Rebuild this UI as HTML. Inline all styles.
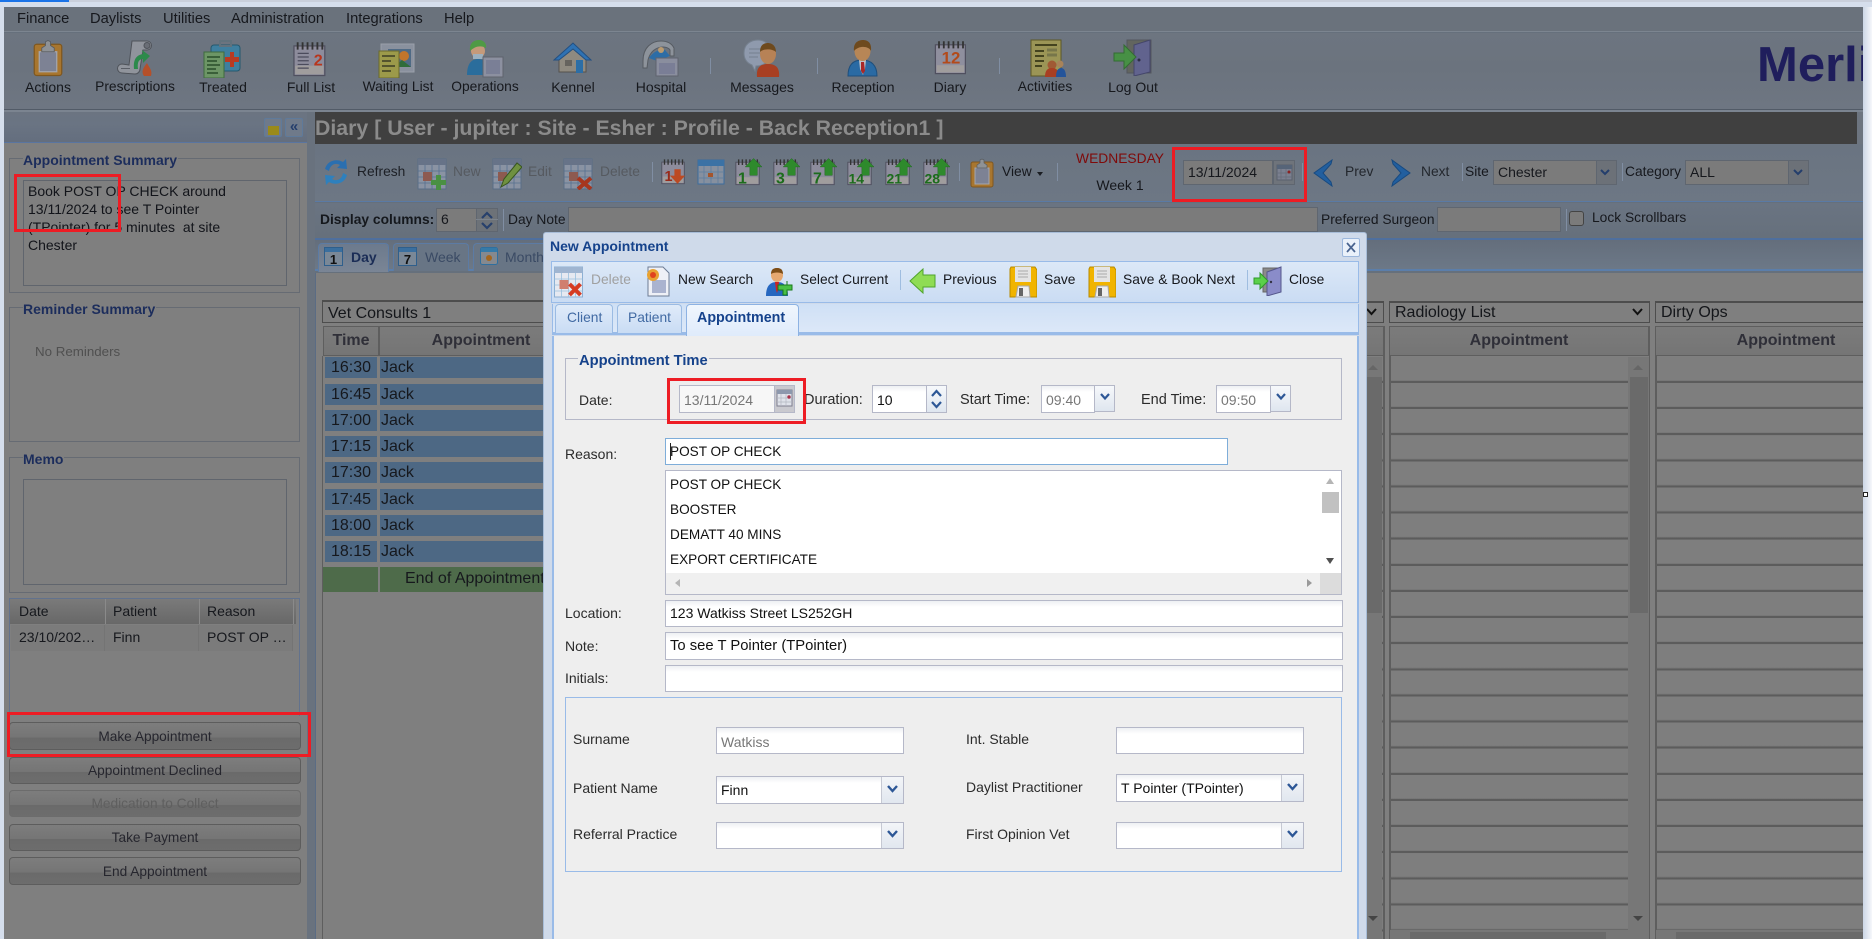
<!DOCTYPE html>
<html lang="en"><head><meta charset="utf-8"><title>Diary</title>
<style>
*{box-sizing:border-box}
html,body{margin:0;padding:0;width:1872px;height:939px;overflow:hidden;background:#d5deec;font-family:"Liberation Sans",Arial,sans-serif;font-size:14px;color:#16181d}
.a,.t,svg.i{position:absolute}
.t{white-space:nowrap;line-height:20px;height:20px}
.c{transform:translateX(-50%)}
.b{font-weight:bold}
.lg{font-weight:bold;color:#1c2d5c;background:#7f7f7f;padding-right:1px}
.fs{position:absolute;border:1px solid #666b73}
.ta{position:absolute;border:1px solid #60656d;background:#7f7f7f}
.btn{position:absolute;left:9px;width:292px;border:1px solid #5d5d5d;border-radius:4px;background:linear-gradient(#7d7d7d 0,#757575 55%,#6a6a6a 56%,#6d6d6d 100%);text-align:center;color:#26262e;line-height:25px;font-size:13.7px}
.sep{position:absolute;width:1px;background:#808ea3}
.dim{position:absolute;background:#777;border:1px solid #5f6670}
.red{position:absolute;border:3px solid #ed1c24;z-index:50}
.hd{position:absolute;background:linear-gradient(#7b7b7b,#757575);border:1px solid #5e5e5e}
.sel{position:absolute;border:1px solid #4d4d4d;background:#7f7f7f;border-top-width:2px}
.bl{position:absolute;background:#4d6884}
.col{position:absolute;top:357px;height:582px;background:repeating-linear-gradient(#7e7e7e 0,#7e7e7e 23px,#797979 23px,#757575 24px,#5c5c5c 24px,#5c5c5c 26px,#757575 26px,#7e7e7e 26.12px)}
.mi{position:absolute;border:1px solid #b5b8c8;background:linear-gradient(#eef0f3,#fff 6px);color:#111;line-height:25px;padding-left:4px}
.tr{position:absolute;border:1px solid #b5b8c8;background:linear-gradient(#f6f8fb,#dfe6ef)}
.fl{position:absolute;border:1px solid #b5b8c8}
.ml{position:absolute;white-space:nowrap;line-height:20px;height:20px;color:#2b2b2b}
.mb{color:#20242c}
</style></head>
<body>
<svg width="0" height="0" style="position:absolute">
<defs>
<symbol id="cal" viewBox="0 0 30 30"><rect x="2" y="4" width="25" height="24" fill="#8d8c9c" stroke="#50505f"/><rect x="3" y="20" width="23" height="7" fill="#a09d9d"/><path d="M5 1v6M9 1v6M13 1v6M17 1v6M21 1v6M25 1v6" stroke="#333" stroke-width="1.5"/></symbol>
<symbol id="grid" viewBox="0 0 30 32"><rect x="1" y="1" width="28" height="30" fill="#8a93a3" stroke="#5a6d86"/><rect x="1" y="1" width="28" height="6" fill="#677388"/><path d="M8 7v24M15 7v24M22 7v24M1 13h28M1 19h28M1 25h28" stroke="#56708f" stroke-width=".8"/><rect x="6" y="14" width="9" height="9" fill="#8d5a50"/></symbol>
<symbol id="lite" viewBox="0 0 30 32"><rect x="1" y="1" width="28" height="30" fill="#e6e9f1" stroke="#8cb0d4"/><rect x="1" y="1" width="28" height="6" fill="#9fb5d1"/><path d="M8 7v24M15 7v24M22 7v24M1 13h28M1 19h28M1 25h28" stroke="#9ac0df" stroke-width=".8"/><rect x="6" y="14" width="9" height="9" fill="#d07f6f"/><path d="M16 18l11 11M27 18l-11 11" stroke="#d63b22" stroke-width="4"/></symbol>
<symbol id="disk" viewBox="0 0 28 32"><path d="M2 1h24l2 3v27H1V3z" fill="#f1b400" stroke="#b78a00"/><rect x="6" y="1" width="16" height="15" fill="#e4e4e4"/><path d="M9 5h10M9 8h10M9 11h10" stroke="#aaa"/><path d="M7 31l2-11h11l1 11z" fill="#eee" stroke="#aaa"/><rect x="10" y="22" width="4" height="8" fill="#666"/></symbol>
<symbol id="cb" viewBox="0 0 24 30"><rect x="1" y="4" width="22" height="25" rx="2" fill="#a8762f" stroke="#7f571f"/><rect x="5" y="10" width="14" height="16" fill="#7d8294" stroke="#a5a7ae"/><path d="M7 7l3-2V2l2-1 2 1v3l3 2v3H7z" fill="#8f9296" stroke="#595c60" stroke-width=".7"/></symbol>
</defs>
</svg>

<!-- window edges -->
<div class="a" style="left:0;top:0;width:69px;height:2px;background:#1a73e8"></div>
<div class="a" style="left:69px;top:0;width:1803px;height:2px;background:#c9cfdb"></div>
<div class="a" style="left:1863px;top:7px;width:9px;height:932px;background:linear-gradient(90deg,#ccd6e6,#f6f8fb)"></div>
<div class="a" style="left:1863px;top:492px;width:5px;height:5px;background:#fff;border:1px solid #222"></div>

<!-- main dim region -->
<div class="a" style="left:4px;top:7px;width:1859px;height:932px;background:#66707c"></div>

<!-- menu -->
<div class="a" style="left:4px;top:7px;width:1859px;height:25px;background:#6a727c;border-bottom:1px solid #7c8590"></div>
<div class="t" style="left:17px;top:9px;font-size:14.7px">Finance</div>
<div class="t" style="left:90px;top:9px;font-size:14.7px">Daylists</div>
<div class="t" style="left:163px;top:9px;font-size:14.7px">Utilities</div>
<div class="t" style="left:231px;top:9px;font-size:14.7px">Administration</div>
<div class="t" style="left:346px;top:9px;font-size:14.7px">Integrations</div>
<div class="t" style="left:444px;top:9px;font-size:14.7px">Help</div>

<!-- main toolbar -->
<div class="a" style="left:4px;top:33px;width:1859px;height:77px;background:linear-gradient(#6d7580,#6b737e 45%,#6e7682);border-bottom:1px solid #525b67"></div>
<div class="a" style="left:4px;top:110px;width:1859px;height:2px;background:#7b8490"></div>

<svg class="i" style="left:33px;top:39px" width="30" height="38" viewBox="0 0 24 30"><use href="#cb"/></svg>
<svg class="i" style="left:117px;top:39px" width="38" height="38" viewBox="0 0 38 38"><path d="M15 2h15a4.500 4.500 0 0 1 0 9h-4l-3 19a5 5 0 0 1-5 5L5 34a4.500 4.500 0 0 1 0-9l7 1z" fill="#90949c" stroke="#4f535a"/><circle cx="30" cy="6.500" r="3" fill="#6a6e76" stroke="#4f535a"/><path d="M4 29.500h9" stroke="#5a5e66"/><path d="M17 30c-1-9 2-14 9-15l-1-4 8 6-7 7v-4c-4 0-6 3-5 10z" fill="#2c8a4b"/><path d="M27 37c-3-4-1-8 3-13 1 3 6 7 4 13z" fill="#b5502a"/></svg>
<svg class="i" style="left:203px;top:40px" width="38" height="38" viewBox="0 0 38 38"><rect x="8" y="5" width="29" height="26" rx="3" fill="#3f7f9f" stroke="#24586e"/><rect x="17" y="1" width="11" height="5" fill="none" stroke="#61727d" stroke-width="2"/><path d="M27 12h4v5h5v5h-5v5h-4v-5h-5v-5h5z" fill="#b83a22"/><rect x="1" y="12" width="20" height="26" fill="#6d9666" stroke="#3e6b3e"/><path d="M4 17h13M4 21h10M4 25h13M4 29h9M4 33h11" stroke="#294f2a" stroke-width="1.4"/></svg>
<svg class="i" style="left:291px;top:41px" width="38" height="37" viewBox="0 0 30 30"><use href="#cal"/><text x="18" y="20" font-family="Liberation Sans" font-weight="bold" font-size="13" fill="#b8351c">2</text><path d="M5 10h9M5 13h9M5 16h9M5 19h9M5 22h9" stroke="#4b4b5c"/></svg>
<svg class="i" style="left:378px;top:43px" width="39" height="35" viewBox="0 0 39 35"><rect x="3" y="1" width="33" height="28" fill="#8a919e" stroke="#9aa0aa"/><rect x="10" y="6" width="23" height="18" fill="#4f6a85"/><circle cx="26" cy="13" r="5" fill="#c2752c"/><path d="M16 24l8-7 9 7z" fill="#2f6c3a"/><rect x="1" y="8" width="20" height="27" fill="#9c9a4a" stroke="#6b6a2c"/><path d="M4 13h13M4 18h9M4 23h13M4 28h9" stroke="#3d3d24" stroke-width="1.5"/></svg>
<svg class="i" style="left:466px;top:39px" width="39" height="39" viewBox="0 0 39 39"><path d="M1 36c0-12 5-16 11-16s12 4 12 16z" fill="#2a6d9c"/><circle cx="12" cy="12" r="7" fill="#c59a7a"/><path d="M4 12c-1-9 5-11 9-11s8 3 7 8c-5-3-11-2-16 3z" fill="#4f9a45"/><path d="M7 15h10v5H7z" fill="#9bb0bf"/><rect x="17" y="18" width="20" height="20" fill="#8c90a0" stroke="#5f636d"/><rect x="20" y="21" width="14" height="14" fill="#7a7f96"/></svg>
<svg class="i" style="left:553px;top:42px" width="39" height="32" viewBox="0 0 39 32"><path d="M6 14l14-9 13 9v16H6z" fill="#8f8a80" stroke="#55524d"/><rect x="12" y="18" width="7" height="6" fill="#66635e"/><rect x="23" y="18" width="7" height="13" fill="#2c6ea6"/><path d="M1 18L20 1l18 17-5 0L20 7 6 18z" fill="#2f72b3" stroke="#234f80"/></svg>
<svg class="i" style="left:640px;top:39px" width="40" height="38" viewBox="0 0 40 38"><path d="M3 22C3 8 12 2 21 2c7 0 11 3 13 7v8h-4v-6c-3-5-18-5-22 10l-1 8H3z" fill="#8d939b" stroke="#565b62"/><path d="M9 19c4-6 10-9 16-8l5 6-13 5z" fill="#2d6da6"/><circle cx="21" cy="11" r="3" fill="#b89a70"/><rect x="16" y="19" width="22" height="18" fill="#8a8e9e" stroke="#5f636d"/><rect x="19" y="24" width="16" height="11" fill="#7a7e96"/></svg>
<svg class="i" style="left:743px;top:39px" width="38" height="38" viewBox="0 0 38 38"><path d="M1 14C1 5 8 1 15 1s12 4 12 13-7 13-14 13l-1 5-3-6C4 24 1 20 1 14z" fill="#8f9aad" stroke="#76818f"/><path d="M6 10h14M6 14h12M6 18h9" stroke="#74808f"/><path d="M14 38c-1-10 4-13 11-13s12 3 11 13z" fill="#a83f22"/><ellipse cx="25" cy="15" rx="8" ry="10" fill="#b78256"/><path d="M17 13c0-8 5-9 8-9s8 2 8 9c-3-3-12-4-16 0z" fill="#6e4a1e"/></svg>
<svg class="i" style="left:847px;top:39px" width="31" height="38" viewBox="0 0 31 38"><path d="M1 37c0-11 5-16 14-16s15 5 15 16z" fill="#2a6aa3" stroke="#1f4f7c"/><path d="M12 21h7l-1 9-2 6-3-6z" fill="#bcc0c8"/><path d="M14 23h3l1 9-2 3-2-3z" fill="#a82828"/><ellipse cx="15.500" cy="12" rx="8" ry="10" fill="#b78656"/><path d="M7 12C6 3 12 1 16 1s9 2 8 11c-2-5-12-6-17 0z" fill="#6e4a1e"/></svg>
<svg class="i" style="left:933px;top:40px" width="36" height="36" viewBox="0 0 30 30"><use href="#cal"/><rect x="3" y="8" width="23" height="13" fill="#8f8f9e"/><text x="15" y="19.500" text-anchor="middle" font-family="Liberation Sans" font-weight="bold" font-size="14" fill="#b34a1a">12</text></svg>
<svg class="i" style="left:1030px;top:39px" width="36" height="38" viewBox="0 0 36 38"><rect x="1" y="1" width="30" height="36" fill="#9b9556" stroke="#5c5826"/><path d="M5 6h22M5 12h9M5 17h9M5 22h9M5 27h7" stroke="#44431f" stroke-width="2"/><path d="M17 11h10M17 16h10" stroke="#77764a" stroke-width="3"/><circle cx="22" cy="26" r="4.500" fill="#a05a34"/><path d="M15 38c0-7 3-9 7-9s7 2 7 9z" fill="#a83f22"/><circle cx="30" cy="25" r="3.500" fill="#a88359"/><path d="M26 38c0-6 2-9 5-9s5 3 5 9z" fill="#24549a"/></svg>
<svg class="i" style="left:1113px;top:39px" width="39" height="37" viewBox="0 0 39 37"><rect x="14" y="1" width="24" height="33" fill="#62655f" stroke="#53565e"/><path d="M21 6l16-5v32l-16 4z" fill="#61638e" stroke="#44466a"/><circle cx="26" cy="21" r="1.500" fill="#2c2c44"/><path d="M1 14h10V6l12 12-12 12v-8H1z" fill="#479045" stroke="#336c33"/></svg>

<div class="sep" style="left:710px;top:58px;height:16px"></div>
<div class="sep" style="left:817px;top:58px;height:16px"></div>
<div class="sep" style="left:999px;top:58px;height:16px"></div>
<div class="t c" style="left:48px;top:77px;color:#15181d">Actions</div>
<div class="t c" style="left:135px;top:77px;font-size:13.8px">Prescriptions</div>
<div class="t c" style="left:223px;top:77px">Treated</div>
<div class="t c" style="left:311px;top:77px">Full List</div>
<div class="t c" style="left:398px;top:77px;font-size:13.8px">Waiting List</div>
<div class="t c" style="left:485px;top:77px;font-size:13.8px">Operations</div>
<div class="t c" style="left:573px;top:77px">Kennel</div>
<div class="t c" style="left:661px;top:77px">Hospital</div>
<div class="t c" style="left:762px;top:77px">Messages</div>
<div class="t c" style="left:863px;top:77px">Reception</div>
<div class="t c" style="left:950px;top:77px">Diary</div>
<div class="t c" style="left:1045px;top:77px;font-size:13.8px">Activities</div>
<div class="t c" style="left:1133px;top:77px">Log Out</div>

<div class="a" style="left:1757px;top:36px;width:106px;height:60px;overflow:hidden"><div style="font:bold 49px/58px 'Liberation Sans',sans-serif;color:#1f1e5c;white-space:nowrap;letter-spacing:0">Merlin</div></div>

<!-- left sidebar -->
<div class="a" style="left:4px;top:112px;width:303px;height:31px;background:linear-gradient(#6b7481,#6a7483 40%,#646e7e);border-bottom:1px solid #5a75a0"></div>
<div class="a" style="left:4px;top:143px;width:303px;height:796px;background:#7f7f7f"></div>
<div class="a" style="left:307px;top:112px;width:8px;height:827px;background:#69727e"></div>
<div class="a" style="left:264px;top:118px;width:18px;height:19px;border:1px solid #5f7a9a;border-radius:2px;background:#6f7a8a"></div>
<div class="a" style="left:268px;top:126px;width:11px;height:9px;background:#9a8a1a"></div>
<div class="a" style="left:285px;top:118px;width:18px;height:19px;border:1px solid #5f7a9a;border-radius:2px;background:#6f7a8a;color:#243e6c;font:bold 15px/15px 'Liberation Sans',sans-serif;text-align:center">«</div>

<div class="fs" style="left:9px;top:158px;width:291px;height:135px"></div>
<div class="t lg" style="left:23px;top:150px">Appointment Summary</div>
<div class="ta" style="left:23px;top:180px;width:264px;height:106px"></div>
<div class="a" style="left:28px;top:182px;width:240px;font-size:14px;line-height:18px;color:#12141a">Book POST OP CHECK around<br>13/11/2024 to see T Pointer<br>(TPointer) for 5 minutes&nbsp; at site<br>Chester</div>

<div class="fs" style="left:9px;top:307px;width:291px;height:135px"></div>
<div class="t lg" style="left:23px;top:299px">Reminder Summary</div>
<div class="t" style="left:35px;top:342px;font-size:13.33px;color:#505050">No Reminders</div>

<div class="fs" style="left:9px;top:457px;width:291px;height:136px"></div>
<div class="t lg" style="left:23px;top:449px">Memo</div>
<div class="ta" style="left:23px;top:479px;width:264px;height:106px"></div>

<div class="a" style="left:9px;top:598px;width:291px;height:118px;border:1px solid #62728d;border-bottom:none"></div>
<div class="a" style="left:10px;top:599px;width:286px;height:25px;background:linear-gradient(#7a7a7a,#686868)"></div>
<div class="a" style="left:105px;top:599px;width:1px;height:25px;background:#8a8a8a"></div>
<div class="a" style="left:199px;top:599px;width:1px;height:25px;background:#8a8a8a"></div>
<div class="a" style="left:293px;top:599px;width:1px;height:25px;background:#8a8a8a"></div>
<div class="a" style="left:11px;top:625px;width:282px;height:26px;background:#7b7b7b;border-right:1px solid #747474"></div>
<div class="a" style="left:104px;top:625px;width:1px;height:26px;background:#747474"></div>
<div class="a" style="left:198px;top:625px;width:1px;height:26px;background:#747474"></div>
<div class="t" style="left:19px;top:601px">Date</div>
<div class="t" style="left:113px;top:601px">Patient</div>
<div class="t" style="left:207px;top:601px">Reason</div>
<div class="t" style="left:19px;top:627px">23/10/202…</div>
<div class="t" style="left:113px;top:627px">Finn</div>
<div class="t" style="left:207px;top:627px">POST OP …</div>

<div class="btn" style="top:722px;height:28px;line-height:27px">Make Appointment</div>
<div class="btn" style="top:757px;height:27px">Appointment Declined</div>
<div class="btn" style="top:790px;height:27px;color:#5f5f5f;border-color:#6c6c6c">Medication to Collect</div>
<div class="btn" style="top:824px;height:27px">Take Payment</div>
<div class="btn" style="top:857px;height:28px;line-height:27px">End Appointment</div>
<div class="red" style="left:14px;top:174px;width:107px;height:58px"></div>
<div class="red" style="left:7px;top:712px;width:304px;height:45px"></div>

<!-- diary panel -->
<div class="a" style="left:315px;top:112px;width:1543px;height:32px;background:#404040"></div>
<div class="a" style="left:1857px;top:112px;width:6px;height:32px;background:#6d7580"></div>
<div class="t b" style="left:315px;top:116px;height:24px;line-height:24px;font-size:21.300px;color:#8b8b8b">Diary [ User - jupiter : Site - Esher : Profile - Back Reception1 ]</div>
<div class="a" style="left:315px;top:144px;width:1548px;height:58px;background:linear-gradient(#6a7481,#6d7784);border-bottom:1px solid #5a7aa5"></div>
<div class="a" style="left:315px;top:203px;width:1548px;height:37px;background:linear-gradient(#6a7482,#66707c);border-bottom:2px solid #4e6f9e"></div>
<div class="a" style="left:315px;top:240px;width:1548px;height:31px;background:linear-gradient(#646e7c,#6c7887);border-bottom:2px solid #5b7eaa"></div>
<div class="a" style="left:315px;top:273px;width:1548px;height:666px;background:#7f7f7f;border-left:1px solid #5b6c84"></div>

<!-- diary toolbar -->
<svg class="i" style="left:322px;top:157px" width="28" height="30" viewBox="0 0 28 30"><path d="M3 12C5 4 14 1 21 5l3-3 1 10-10-1 3-3C13 5 8 8 7 14z" fill="#2a6fb0"/><path d="M25 18c-2 8-11 11-18 7l-3 3-1-10 10 1-3 3c5 3 10 0 11-6z" fill="#2e80bd"/></svg>
<div class="t" style="left:357px;top:162px;color:#1d2026;font-size:13.8px">Refresh</div>
<svg class="i" style="left:417px;top:158px" width="30" height="32" viewBox="0 0 30 32"><use href="#grid"/><path d="M19 17h5v5h5v5h-5v5h-5v-5h-5v-5h5z" fill="#4a9042"/></svg>
<div class="t" style="left:453px;top:162px;color:#565a60;font-size:13.8px">New</div>
<svg class="i" style="left:492px;top:158px" width="30" height="32" viewBox="0 0 30 32"><use href="#grid"/><path d="M9 29l3-8L25 5l5 4-14 16z" fill="#6f9140" stroke="#38551f"/></svg>
<div class="t" style="left:528px;top:162px;color:#565a60;font-size:13.8px">Edit</div>
<svg class="i" style="left:563px;top:158px" width="30" height="32" viewBox="0 0 30 32"><use href="#grid"/><path d="M15 20l13 11M28 20L15 31" stroke="#a6361f" stroke-width="4"/></svg>
<div class="t" style="left:600px;top:162px;color:#565a60;font-size:13.8px">Delete</div>
<div class="sep" style="left:652px;top:162px;height:20px"></div>
<svg class="i" style="left:660px;top:158px" width="27" height="28" viewBox="0 0 30 30"><use href="#cal"/><text x="5" y="25" font-family="Liberation Sans" font-weight="bold" font-size="16" fill="#992a1a">1</text><path d="M16 12h7v7h5l-8.500 9L11 19h5z" fill="#bc4a22"/></svg>
<svg class="i" style="left:697px;top:159px" width="28" height="26" viewBox="0 0 28 26"><rect x="1" y="1" width="26" height="24" fill="#86909f" stroke="#3c6c9c"/><rect x="1" y="1" width="26" height="6" fill="#3b72a5"/><path d="M7 7v18M14 7v18M21 7v18M1 13h26M1 19h26" stroke="#5d7d9f" stroke-width=".8"/><rect x="11" y="14" width="5" height="4" fill="#a4552c"/></svg>
<svg class="i" style="left:734px;top:158px" width="28" height="29" viewBox="0 0 30 30"><use href="#cal"/><text x="9" y="27" text-anchor="middle" font-family="Liberation Sans" font-weight="bold" font-size="17" fill="#1c6c1c">1</text><path d="M21 0l9 9h-5v9h-8V9h-5z" fill="#2e8a2c" stroke="#1d651c" stroke-width=".5"/></svg>
<svg class="i" style="left:772px;top:158px" width="28" height="29" viewBox="0 0 30 30"><use href="#cal"/><text x="9" y="27" text-anchor="middle" font-family="Liberation Sans" font-weight="bold" font-size="17" fill="#1c6c1c">3</text><path d="M21 0l9 9h-5v9h-8V9h-5z" fill="#2e8a2c" stroke="#1d651c" stroke-width=".5"/></svg>
<svg class="i" style="left:809px;top:158px" width="28" height="29" viewBox="0 0 30 30"><use href="#cal"/><text x="9" y="27" text-anchor="middle" font-family="Liberation Sans" font-weight="bold" font-size="17" fill="#1c6c1c">7</text><path d="M21 0l9 9h-5v9h-8V9h-5z" fill="#2e8a2c" stroke="#1d651c" stroke-width=".5"/></svg>
<svg class="i" style="left:846px;top:158px" width="28" height="29" viewBox="0 0 30 30"><use href="#cal"/><text x="11" y="27" text-anchor="middle" font-family="Liberation Sans" font-weight="bold" font-size="15" fill="#1c6c1c">14</text><path d="M21 0l9 9h-5v9h-8V9h-5z" fill="#2e8a2c" stroke="#1d651c" stroke-width=".5"/></svg>
<svg class="i" style="left:884px;top:158px" width="28" height="29" viewBox="0 0 30 30"><use href="#cal"/><text x="11" y="27" text-anchor="middle" font-family="Liberation Sans" font-weight="bold" font-size="15" fill="#1c6c1c">21</text><path d="M21 0l9 9h-5v9h-8V9h-5z" fill="#2e8a2c" stroke="#1d651c" stroke-width=".5"/></svg>
<svg class="i" style="left:922px;top:158px" width="28" height="29" viewBox="0 0 30 30"><use href="#cal"/><text x="11" y="27" text-anchor="middle" font-family="Liberation Sans" font-weight="bold" font-size="15" fill="#1c6c1c">28</text><path d="M21 0l9 9h-5v9h-8V9h-5z" fill="#2e8a2c" stroke="#1d651c" stroke-width=".5"/></svg>
<div class="sep" style="left:959px;top:163px;height:18px"></div>
<svg class="i" style="left:970px;top:158px" width="24" height="30" viewBox="0 0 24 30"><use href="#cb"/></svg>
<div class="t" style="left:1002px;top:162px;font-size:13.8px">View</div>
<div class="a" style="left:1037px;top:172px;border:3.5px solid transparent;border-top:4px solid #1a1d22;border-bottom:0"></div>
<div class="sep" style="left:1057px;top:163px;height:18px"></div>
<div class="t c" style="left:1120px;top:149px;color:#7f0a0a;font-size:13.8px">WEDNESDAY</div>
<div class="t c" style="left:1120px;top:175px">Week 1</div>
<div class="dim" style="left:1183px;top:160px;width:90px;height:25px;background:#7b7b7b;line-height:23px;padding-left:4px;color:#16181d">13/11/2024</div>
<div class="dim" style="left:1273px;top:160px;width:22px;height:25px;background:#6f747b"></div>
<svg class="i" style="left:1276px;top:164px" width="17" height="17" viewBox="0 0 17 17"><rect x="1" y="1" width="15" height="15" fill="#7b8090" stroke="#5a5f6c"/><rect x="1" y="1" width="15" height="4" fill="#566478"/><path d="M5 5v11M10 5v11M1 9h15M1 13h15" stroke="#666b78" stroke-width=".7"/><circle cx="13" cy="8" r="1.500" fill="#8a2222"/></svg>
<div class="red" style="left:1172px;top:147px;width:135px;height:55px"></div>
<div class="sep" style="left:1302px;top:163px;height:18px"></div>
<svg class="i" style="left:1313px;top:159px" width="20" height="28" viewBox="0 0 20 28"><path d="M19 1L1 14l18 13 -1-4-8-9 8-9z" fill="#225f9f" stroke="#184a80"/></svg>
<div class="t" style="left:1345px;top:162px;color:#23272d;font-size:13.8px">Prev</div>
<svg class="i" style="left:1391px;top:159px" width="20" height="28" viewBox="0 0 20 28"><path d="M1 1l18 13L1 27l1-4 8-9-8-9z" fill="#225f9f" stroke="#184a80"/></svg>
<div class="t" style="left:1421px;top:162px;color:#23272d;font-size:13.8px">Next</div>
<div class="sep" style="left:1462px;top:163px;height:18px"></div>
<div class="t" style="left:1465px;top:162px;font-size:13.8px">Site</div>
<div class="dim" style="left:1493px;top:160px;width:104px;height:25px;background:#7b7b7b;line-height:23px;padding-left:4px;color:#16181d">Chester</div>
<div class="dim" style="left:1596px;top:160px;width:21px;height:25px;background:#6c7178"></div>
<div class="a" style="left:1600px;top:169px;width:10px;height:7px"><svg width="10" height="7" style="display:block"><path d="M1 1l4 4 4-4" fill="none" stroke="#243e6c" stroke-width="2"/></svg></div>
<div class="sep" style="left:1622px;top:163px;height:18px"></div>
<div class="t" style="left:1625px;top:162px;font-size:13.8px">Category</div>
<div class="dim" style="left:1685px;top:160px;width:104px;height:25px;background:#7b7b7b;line-height:23px;padding-left:4px;color:#16181d">ALL</div>
<div class="dim" style="left:1788px;top:160px;width:21px;height:25px;background:#6c7178"></div>
<div class="a" style="left:1793px;top:169px;width:10px;height:7px"><svg width="10" height="7" style="display:block"><path d="M1 1l4 4 4-4" fill="none" stroke="#243e6c" stroke-width="2"/></svg></div>

<!-- row 3 -->
<div class="t b" style="left:320px;top:210px;color:#15181d;font-size:13.8px">Display columns:</div>
<div class="dim" style="left:436px;top:208px;width:41px;height:24px;background:#7b7b7b;line-height:20px;padding-left:4px;color:#16181d">6</div>
<div class="a" style="left:476px;top:208px;width:22px;height:24px;background:#6d7278;border:1px solid #5f6670"></div>
<div class="a" style="left:476px;top:219px;width:22px;height:1px;background:#7b838d"></div>
<svg class="i" style="left:481px;top:211px" width="12" height="19" viewBox="0 0 12 19"><path d="M1 7l5-5 5 5M1 12l5 5 5-5" fill="none" stroke="#27406c" stroke-width="2.200"/></svg>
<div class="sep" style="left:503px;top:209px;height:22px"></div>
<div class="t" style="left:508px;top:210px;font-size:13.8px">Day Note</div>
<div class="dim" style="left:568px;top:207px;width:750px;height:25px;background:#7b7b7b"></div>
<div class="t" style="left:1321px;top:210px;font-size:13.8px">Preferred Surgeon</div>
<div class="dim" style="left:1437px;top:207px;width:124px;height:25px;background:#7b7b7b"></div>
<div class="sep" style="left:1566px;top:209px;height:22px"></div>
<div class="a" style="left:1569px;top:211px;width:15px;height:15px;border:1px solid #444;border-radius:3px;background:#7b7b7b"></div>
<div class="t" style="left:1592px;top:208px;font-size:13.8px">Lock Scrollbars</div>

<!-- tabs -->
<div class="a" style="left:318px;top:243px;width:71px;height:29px;border:1px solid #5c7ba4;border-bottom:none;border-radius:4px 4px 0 0;background:linear-gradient(#6c7a8d,#7a8595)"></div>
<div class="a" style="left:393px;top:243px;width:76px;height:28px;border:1px solid #5c7ba4;border-bottom:none;border-radius:4px 4px 0 0;background:#687585"></div>
<div class="a" style="left:473px;top:243px;width:80px;height:28px;border:1px solid #5c7ba4;border-bottom:none;border-radius:4px 4px 0 0;background:#687585"></div>
<svg class="i" style="left:324px;top:247px" width="19" height="19" viewBox="0 0 19 19"><rect x=".5" y=".5" width="18" height="18" fill="#7a8897" stroke="#2f5f8c"/><rect x="1" y="1" width="17" height="4" fill="#3a6f9f"/><text x="9.500" y="17" text-anchor="middle" font-family="Liberation Sans" font-weight="bold" font-size="13" fill="#111">1</text></svg>
<div class="t b" style="left:351px;top:247px;color:#1b2d56">Day</div>
<svg class="i" style="left:398px;top:247px" width="19" height="19" viewBox="0 0 19 19"><rect x=".5" y=".5" width="18" height="18" fill="#7a8897" stroke="#2f5f8c"/><rect x="1" y="1" width="17" height="4" fill="#3a6f9f"/><text x="9.500" y="17" text-anchor="middle" font-family="Liberation Sans" font-weight="bold" font-size="13" fill="#111">7</text></svg>
<div class="t" style="left:425px;top:247px;color:#3a4a64">Week</div>
<svg class="i" style="left:480px;top:247px" width="18" height="18" viewBox="0 0 18 18"><rect x=".5" y=".5" width="17" height="17" rx="2" fill="#85898f" stroke="#2f6f9f"/><rect x="1" y="1" width="16" height="4" fill="#357aa8"/><circle cx="9" cy="11" r="3" fill="#a4661e"/></svg>
<div class="t" style="left:505px;top:247px;color:#3a4a64">Month</div>

<!-- vet consults col -->
<div class="sel" style="left:322px;top:300px;width:240px;height:23px"></div>
<div class="t" style="left:328px;top:304px;font-size:16px;line-height:20px;color:#14161a">Vet Consults 1</div>
<div class="hd" style="left:323px;top:326px;width:56px;height:30px"></div>
<div class="hd" style="left:379px;top:326px;width:180px;height:30px"></div>
<div class="t b c" style="left:351px;top:331px;font-size:16px;color:#2f2f38">Time</div>
<div class="t b c" style="left:481px;top:331px;font-size:16px;color:#2f2f38">Appointment</div>
<div class="a" style="left:322px;top:356px;width:1px;height:583px;background:#5e5e5e"></div>

<div class="bl" style="left:325px;top:357px;width:52px;height:21px"></div><div class="bl" style="left:380px;top:357px;width:170px;height:21px"></div>
<div class="bl" style="left:325px;top:384px;width:52px;height:21px"></div><div class="bl" style="left:380px;top:384px;width:170px;height:21px"></div>
<div class="bl" style="left:325px;top:410px;width:52px;height:21px"></div><div class="bl" style="left:380px;top:410px;width:170px;height:21px"></div>
<div class="bl" style="left:325px;top:436px;width:52px;height:21px"></div><div class="bl" style="left:380px;top:436px;width:170px;height:21px"></div>
<div class="bl" style="left:325px;top:462px;width:52px;height:21px"></div><div class="bl" style="left:380px;top:462px;width:170px;height:21px"></div>
<div class="bl" style="left:325px;top:489px;width:52px;height:21px"></div><div class="bl" style="left:380px;top:489px;width:170px;height:21px"></div>
<div class="bl" style="left:325px;top:515px;width:52px;height:21px"></div><div class="bl" style="left:380px;top:515px;width:170px;height:21px"></div>
<div class="bl" style="left:325px;top:541px;width:52px;height:21px"></div><div class="bl" style="left:380px;top:541px;width:170px;height:21px"></div>
<div class="a" style="left:323px;top:567px;width:55px;height:25px;background:#4e6b4a"></div>
<div class="a" style="left:380px;top:567px;width:170px;height:25px;background:#4e6b4a"></div>
<div class="t c" style="left:351px;top:358px;font-size:16px">16:30</div><div class="t" style="left:381px;top:358px;font-size:16px">Jack</div>
<div class="t c" style="left:351px;top:385px;font-size:16px">16:45</div><div class="t" style="left:381px;top:385px;font-size:16px">Jack</div>
<div class="t c" style="left:351px;top:411px;font-size:16px">17:00</div><div class="t" style="left:381px;top:411px;font-size:16px">Jack</div>
<div class="t c" style="left:351px;top:437px;font-size:16px">17:15</div><div class="t" style="left:381px;top:437px;font-size:16px">Jack</div>
<div class="t c" style="left:351px;top:463px;font-size:16px">17:30</div><div class="t" style="left:381px;top:463px;font-size:16px">Jack</div>
<div class="t c" style="left:351px;top:490px;font-size:16px">17:45</div><div class="t" style="left:381px;top:490px;font-size:16px">Jack</div>
<div class="t c" style="left:351px;top:516px;font-size:16px">18:00</div><div class="t" style="left:381px;top:516px;font-size:16px">Jack</div>
<div class="t c" style="left:351px;top:542px;font-size:16px">18:15</div><div class="t" style="left:381px;top:542px;font-size:16px">Jack</div>
<div class="t" style="left:405px;top:569px;font-size:16px">End of Appointment</div>

<!-- partial col behind modal -->
<div class="sel" style="left:1360px;top:301px;width:24px;height:22px"></div>
<svg class="i" style="left:1366px;top:308px" width="11" height="8"><path d="M1 1l4.500 5 4.500-5" fill="none" stroke="#111" stroke-width="2"/></svg>
<div class="hd" style="left:1360px;top:326px;width:24px;height:30px"></div>
<div class="col" style="left:1360px;width:24px"></div>
<div class="a" style="left:1367px;top:357px;width:15px;height:582px;background:#777"></div>
<div class="a" style="left:1367px;top:377px;width:15px;height:236px;background:#6a6a6a"></div>
<div class="a" style="left:1368px;top:365px;border:5px solid transparent;border-bottom:5px solid #666;border-top:0"></div>
<div class="a" style="left:1368px;top:916px;border:5px solid transparent;border-top:5px solid #444;border-bottom:0"></div>
<div class="a" style="left:1383px;top:326px;width:2px;height:613px;background:#5e5e5e"></div>

<!-- radiology col -->
<div class="sel" style="left:1389px;top:301px;width:261px;height:22px"></div>
<div class="t" style="left:1395px;top:303px;font-size:16px;color:#14161a">Radiology List</div>
<svg class="i" style="left:1632px;top:308px" width="11" height="8"><path d="M1 1l4.500 5 4.500-5" fill="none" stroke="#111" stroke-width="2"/></svg>
<div class="hd" style="left:1389px;top:326px;width:260px;height:30px"></div>
<div class="t b c" style="left:1519px;top:331px;font-size:16px;color:#2f2f38">Appointment</div>
<div class="col" style="left:1389px;width:260px"></div>
<div class="a" style="left:1389px;top:356px;width:2px;height:583px;background:#5e5e5e"></div>
<div class="a" style="left:1628px;top:357px;width:21px;height:582px;background:#777"></div>
<div class="a" style="left:1630px;top:377px;width:18px;height:236px;background:#6a6a6a"></div>
<div class="a" style="left:1633px;top:365px;border:5px solid transparent;border-bottom:5px solid #666;border-top:0"></div>
<div class="a" style="left:1633px;top:916px;border:5px solid transparent;border-top:5px solid #444;border-bottom:0"></div>
<div class="a" style="left:1649px;top:326px;width:1px;height:613px;background:#5e5e5e"></div>
<div class="a" style="left:1390px;top:930px;width:238px;height:9px;background:#777"></div>
<div class="a" style="left:1410px;top:932px;width:196px;height:7px;background:#6a6a6a"></div>

<!-- dirty ops col -->
<div class="sel" style="left:1655px;top:301px;width:208px;height:22px;border-right:none"></div>
<div class="t" style="left:1661px;top:303px;font-size:16px;color:#14161a">Dirty Ops</div>
<div class="hd" style="left:1655px;top:326px;width:208px;height:30px;border-right:none"></div>
<div class="t b c" style="left:1786px;top:331px;font-size:16px;color:#2f2f38">Appointment</div>
<div class="col" style="left:1655px;width:208px"></div>
<div class="a" style="left:1655px;top:356px;width:2px;height:583px;background:#5e5e5e"></div>
<div class="a" style="left:1656px;top:930px;width:207px;height:9px;background:#777"></div>
<div class="a" style="left:1676px;top:932px;width:187px;height:7px;background:#6a6a6a"></div>

<!-- MODAL -->
<div class="a" style="left:543px;top:232px;width:824px;height:707px;background:#cfdaea;border:1px solid #a8bdd8;border-bottom:none;border-radius:3px 3px 0 0;z-index:10;overflow:hidden">
</div>
<div style="position:absolute;left:0;top:0;width:1872px;height:939px;z-index:11;overflow:hidden">
<div class="t b" style="left:550px;top:236px;color:#15428b">New Appointment</div>
<div class="a" style="left:1342px;top:238px;width:18px;height:19px;background:#eaf1fa;border:1px solid #9cb7dc;border-radius:2px"></div>
<svg class="i" style="left:1346px;top:242px" width="10" height="11"><path d="M1 1l8 9M9 1l-8 9" stroke="#48638f" stroke-width="1.700"/></svg>

<div class="a" style="left:551px;top:261px;width:808px;height:42px;border:1px solid #99bbe8;background:linear-gradient(#dce8f7,#cadcf3)"></div>
<svg class="i" style="left:553px;top:266px" width="31" height="32" viewBox="0 0 30 32"><use href="#lite"/></svg>
<div class="t" style="left:591px;top:270px;color:#a0a0a0;font-size:13.8px">Delete</div>
<svg class="i" style="left:645px;top:266px" width="25" height="31" viewBox="0 0 25 31"><path d="M3 1h15l6 6v23H3z" fill="#eef0f6" stroke="#6d7c94"/><rect x="7" y="14" width="14" height="13" fill="#aab3cf"/><circle cx="8" cy="9" r="6" fill="#e8a232"/><circle cx="8" cy="9" r="3" fill="#e0431e"/></svg>
<div class="t" style="left:678px;top:270px;font-size:13.8px">New Search</div>
<svg class="i" style="left:765px;top:267px" width="29" height="30" viewBox="0 0 29 30"><path d="M1 29c0-10 4-14 11-14s11 4 11 14z" fill="#2667c0"/><path d="M10 15h4l-1 8-1 3-1-3z" fill="#c22"/><ellipse cx="12" cy="8" rx="6" ry="7" fill="#e6a870"/><path d="M6 7C6 2 9 1 12 1s6 1 6 6c-3-2-9-2-12 0z" fill="#7e4e18"/><path d="M18 18h4v-4h0v4h5v5h-5v5h-4v-5h-5v-5h5z" fill="#49c045" stroke="#1a7b1a"/></svg>
<div class="t" style="left:800px;top:270px;font-size:13.8px">Select Current</div>
<div class="sep" style="left:900px;top:270px;height:20px;background:#9fbde0"></div>
<svg class="i" style="left:909px;top:268px" width="27" height="26" viewBox="0 0 27 26"><path d="M14 1L1 13l13 12v-6h12V7H14z" fill="#8fdc54" stroke="#4fa32c"/></svg>
<div class="t" style="left:943px;top:270px;font-size:13.8px">Previous</div>
<svg class="i" style="left:1009px;top:266px" width="28" height="32" viewBox="0 0 28 32"><use href="#disk"/></svg>
<div class="t" style="left:1044px;top:270px;font-size:13.8px">Save</div>
<svg class="i" style="left:1088px;top:266px" width="28" height="32" viewBox="0 0 28 32"><use href="#disk"/></svg>
<div class="t" style="left:1123px;top:270px;font-size:13.8px">Save &amp; Book Next</div>
<div class="sep" style="left:1247px;top:270px;height:20px;background:#9fbde0"></div>
<svg class="i" style="left:1253px;top:266px" width="29" height="30" viewBox="0 0 29 30"><rect x="10" y="2" width="17" height="24" fill="#8b8b8b" stroke="#666"/><path d="M14 6l14-5v25l-14 4z" fill="#8a8cc9" stroke="#55578c"/><circle cx="18" cy="16" r="1.200" fill="#334"/><path d="M1 12h6V7l8 8-8 8v-5H1z" fill="#5bd04a" stroke="#2f9a2a"/></svg>
<div class="t" style="left:1289px;top:270px;font-size:13.8px">Close</div>

<div class="a" style="left:552px;top:304px;width:807px;height:31px;background:linear-gradient(#cfe0f5,#dce8f8);border:1px solid #99bbe8;border-top:none;border-bottom:3px solid #99bbe8"></div>
<div class="a" style="left:555px;top:304px;width:58px;height:29px;border:1px solid #9bbbe3;border-bottom:none;border-radius:4px 4px 0 0;background:linear-gradient(#e0ebf9,#c9dcf4)"></div>
<div class="a" style="left:617px;top:304px;width:65px;height:29px;border:1px solid #9bbbe3;border-bottom:none;border-radius:4px 4px 0 0;background:linear-gradient(#e0ebf9,#c9dcf4)"></div>
<div class="a" style="left:686px;top:304px;width:113px;height:32px;border:1px solid #8db2e3;border-bottom:none;border-radius:4px 4px 0 0;background:linear-gradient(#f0f6fd,#dfebfb)"></div>
<div class="t" style="left:567px;top:308px;color:#416aa3;font-size:13.8px">Client</div>
<div class="t" style="left:628px;top:308px;color:#416aa3;font-size:13.8px">Patient</div>
<div class="t b" style="left:697px;top:308px;color:#15428b;font-size:14.3px">Appointment</div>

<div class="a" style="left:552px;top:336px;width:807px;height:603px;background:#eeeeee;border:1px solid #99bbe8;border-top:none;border-bottom:none;border-left-width:2px;border-right-width:2px"></div>

<div class="fl" style="left:565px;top:358px;width:777px;height:62px"></div>
<div class="t b" style="left:578px;top:351px;background:#eee;padding:0 1px;font-size:14.7px;color:#15428b">Appointment Time</div>
<div class="ml" style="left:579px;top:390px">Date:</div>
<div class="mi" style="left:679px;top:385px;width:96px;height:28px;color:#777;background:#f7f7f7;line-height:29px">13/11/2024</div>
<div class="a" style="left:774px;top:385px;width:21px;height:28px;border:1px solid #b5b8c8;background:#c9c9cf"></div>
<svg class="i" style="left:776px;top:389px" width="17" height="18" viewBox="0 0 17 18"><rect x="1" y="1" width="15" height="16" fill="#dfe2ea" stroke="#7f7f8f"/><rect x="1" y="1" width="15" height="4" fill="#8d98ad"/><path d="M5 5v12M10 5v12M1 9h15M1 13h15" stroke="#b3b6c0" stroke-width=".7"/><circle cx="13" cy="8" r="1.700" fill="#a8324a"/></svg>
<div class="ml" style="left:804px;top:390px;font-size:14.5px">Duration:</div>
<div class="mi" style="left:872px;top:385px;width:55px;height:28px;line-height:29px">10</div>
<div class="tr" style="left:926px;top:385px;width:21px;height:28px"></div>
<svg class="i" style="left:930px;top:388px" width="13" height="22" viewBox="0 0 13 22"><path d="M2 8l4.500-5L11 8M2 14l4.500 5 4.500-5" fill="none" stroke="#2d5796" stroke-width="2.200"/></svg>
<div class="ml" style="left:960px;top:390px;font-size:14.5px">Start Time:</div>
<div class="mi" style="left:1041px;top:385px;width:54px;height:28px;color:#777;line-height:29px">09:40</div>
<div class="tr" style="left:1094px;top:385px;width:21px;height:27px"></div>
<svg class="i" style="left:1100px;top:393px" width="10" height="8"><path d="M1 1l4 4.500L9 1" fill="none" stroke="#2d5796" stroke-width="2.200"/></svg>
<div class="ml" style="left:1141px;top:390px;font-size:14.5px">End Time:</div>
<div class="mi" style="left:1216px;top:385px;width:55px;height:28px;color:#777;line-height:29px">09:50</div>
<div class="tr" style="left:1270px;top:385px;width:21px;height:27px"></div>
<svg class="i" style="left:1276px;top:393px" width="10" height="8"><path d="M1 1l4 4.500L9 1" fill="none" stroke="#2d5796" stroke-width="2.200"/></svg>
<div class="red" style="left:667px;top:378px;width:139px;height:46px"></div>

<div class="ml" style="left:565px;top:444px">Reason:</div>
<div class="mi" style="left:665px;top:438px;width:563px;height:27px;border-color:#7eadd9;background:#fff;font-size:13.6px">POST OP CHECK</div>
<div class="a" style="left:670px;top:443px;width:1px;height:17px;background:#222"></div>

<div class="a" style="left:665px;top:470px;width:677px;height:125px;background:#fff;border:1px solid #b5b8c8"></div>
<div class="t" style="left:670px;top:475px;color:#111;font-size:13.6px">POST OP CHECK</div>
<div class="t" style="left:670px;top:500px;color:#111;font-size:13.6px">BOOSTER</div>
<div class="t" style="left:670px;top:525px;color:#111;font-size:13.6px">DEMATT 40 MINS</div>
<div class="t" style="left:670px;top:550px;color:#111;font-size:13.6px">EXPORT CERTIFICATE</div>
<div class="a" style="left:1322px;top:492px;width:17px;height:21px;background:#c1c1c1"></div>
<div class="a" style="left:1326px;top:478px;border:4.500px solid transparent;border-bottom:6px solid #b5b5b5;border-top:0"></div>
<div class="a" style="left:1326px;top:558px;border:4.500px solid transparent;border-top:6px solid #505050;border-bottom:0"></div>
<div class="a" style="left:666px;top:573px;width:654px;height:21px;background:#f0f0f0"></div>
<div class="a" style="left:1320px;top:573px;width:21px;height:21px;background:#dcdcdc"></div>
<div class="a" style="left:675px;top:579px;border:4.500px solid transparent;border-right:5px solid #b5b5b5;border-left:0"></div>
<div class="a" style="left:1307px;top:579px;border:4.500px solid transparent;border-left:5px solid #9a9a9a;border-right:0"></div>

<div class="ml" style="left:565px;top:603px">Location:</div>
<div class="mi" style="left:665px;top:600px;width:678px;height:27px">123 Watkiss Street LS252GH</div>
<div class="ml" style="left:565px;top:636px">Note:</div>
<div class="mi" style="left:665px;top:632px;width:678px;height:28px;line-height:27px;font-size:14.8px">To see T Pointer (TPointer)</div>
<div class="ml" style="left:565px;top:668px">Initials:</div>
<div class="mi" style="left:665px;top:665px;width:678px;height:27px"></div>

<div class="a" style="left:565px;top:697px;width:777px;height:175px;border:1px solid #99bbe8"></div>
<div class="ml" style="left:573px;top:729px">Surname</div>
<div class="mi" style="left:716px;top:727px;width:188px;height:27px;color:#777;line-height:28px">Watkiss</div>
<div class="ml" style="left:966px;top:729px">Int. Stable</div>
<div class="mi" style="left:1116px;top:727px;width:188px;height:27px"></div>
<div class="ml" style="left:573px;top:778px">Patient Name</div>
<div class="mi" style="left:716px;top:776px;width:188px;height:28px;line-height:26px">Finn</div>
<div class="a" style="left:881px;top:777px;width:22px;height:26px;background:linear-gradient(#f3f5f8,#e1e7ef);border-left:1px solid #c6c9d3"></div>
<svg class="i" style="left:887px;top:785px" width="11" height="8"><path d="M1 1l4.500 5L10 1" fill="none" stroke="#2d5796" stroke-width="2.400"/></svg>
<div class="ml" style="left:966px;top:777px">Daylist Practitioner</div>
<div class="mi" style="left:1116px;top:774px;width:188px;height:28px;line-height:27px">T Pointer (TPointer)</div>
<div class="a" style="left:1281px;top:775px;width:22px;height:26px;background:linear-gradient(#f3f5f8,#e1e7ef);border-left:1px solid #c6c9d3"></div>
<svg class="i" style="left:1287px;top:783px" width="11" height="8"><path d="M1 1l4.500 5L10 1" fill="none" stroke="#2d5796" stroke-width="2.400"/></svg>
<div class="ml" style="left:573px;top:824px">Referral Practice</div>
<div class="mi" style="left:716px;top:822px;width:188px;height:27px"></div>
<div class="a" style="left:881px;top:823px;width:22px;height:25px;background:linear-gradient(#f3f5f8,#e1e7ef);border-left:1px solid #c6c9d3"></div>
<svg class="i" style="left:887px;top:830px" width="11" height="8"><path d="M1 1l4.500 5L10 1" fill="none" stroke="#2d5796" stroke-width="2.400"/></svg>
<div class="ml" style="left:966px;top:824px">First Opinion Vet</div>
<div class="mi" style="left:1116px;top:822px;width:188px;height:27px"></div>
<div class="a" style="left:1281px;top:823px;width:22px;height:25px;background:linear-gradient(#f3f5f8,#e1e7ef);border-left:1px solid #c6c9d3"></div>
<svg class="i" style="left:1287px;top:830px" width="11" height="8"><path d="M1 1l4.500 5L10 1" fill="none" stroke="#2d5796" stroke-width="2.400"/></svg>
</div>
</body></html>
